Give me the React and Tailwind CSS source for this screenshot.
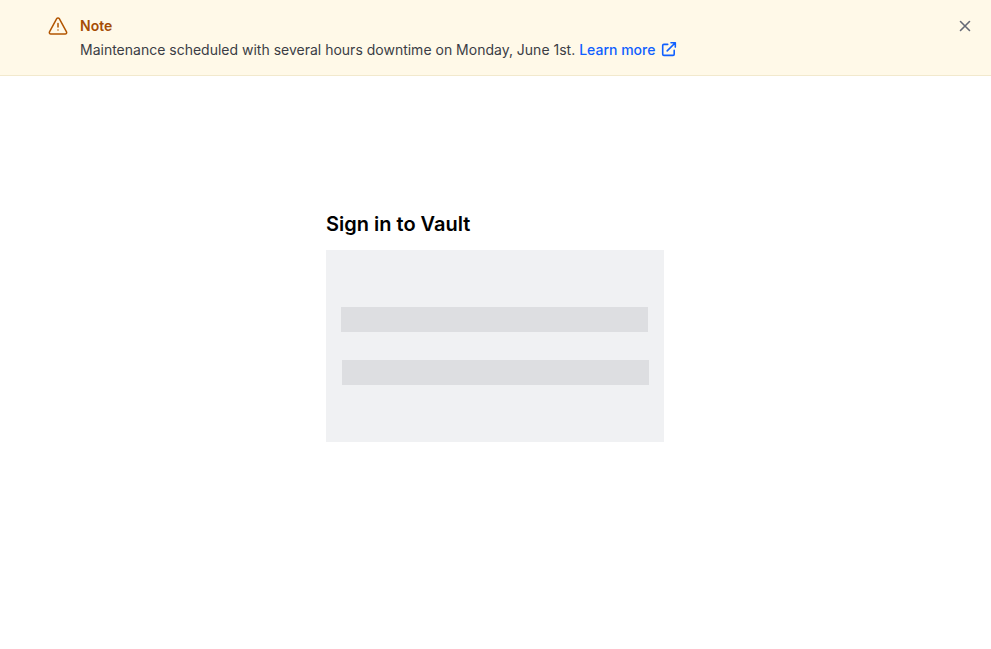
function WarningIcon() {
  return (
    <svg className="size-5 shrink-0" viewBox="0 0 20 20" fill="none" stroke="currentColor" strokeWidth="1.5" strokeLinecap="round" strokeLinejoin="round" aria-hidden="true">
      <path d="M8.7 2.7 1.5 15.8A1.5 1.5 0 0 0 2.8 18H17.2A1.5 1.5 0 0 0 18.5 15.8L11.3 2.7A1.5 1.5 0 0 0 8.7 2.7Z" />
      <path d="M10 7.4v3.6M10 14v.1" />
    </svg>
  );
}

function ExternalLinkIcon() {
  return (
    <svg className="size-4 shrink-0" viewBox="0 0 16 16" fill="none" stroke="currentColor" strokeWidth="1.6" strokeLinecap="round" strokeLinejoin="round" aria-hidden="true">
      <path d="M6.7 2.4H2.9c-.7 0-1.2.5-1.2 1.2v8.6c0 .7.5 1.2 1.2 1.2H12c.7 0 1.2-.5 1.2-1.2V8.4" />
      <path d="M10 .8h4.3v4.3M14.3.8 6.2 8.9" />
    </svg>
  );
}

function CloseIcon() {
  return (
    <svg className="size-4" viewBox="0 0 16 16" fill="none" stroke="currentColor" strokeWidth="1.6" strokeLinecap="round" aria-hidden="true">
      <path d="m3.5 3.5 9 9M12.5 3.5l-9 9" />
    </svg>
  );
}

function MaintenanceBanner() {
  return (
    <aside className="flex items-start gap-3 border-b border-[#f2e9cd] bg-[#fff9e8] pt-4 pr-[18px] pb-[13px] pl-12 text-sm">
      <div className="text-[#b25500]">
        <WarningIcon />
      </div>
      <div className="min-w-0 flex-1">
        <p className="leading-5 font-semibold text-[#a54c05]">Note</p>
        <div className="mt-0.5 flex flex-wrap items-center gap-x-1 leading-6 text-[#3b3d45]">
          <p className="leading-6">Maintenance scheduled with several hours downtime on Monday, June 1st.</p>
          <a href="#maintenance" className="flex items-center gap-1.5 font-medium text-[#1060ff]">
            Learn more
            <ExternalLinkIcon />
          </a>
        </div>
      </div>
      <button type="button" aria-label="Dismiss" className="mt-0.5 text-[#656a76]">
        <CloseIcon />
      </button>
    </aside>
  );
}

export default function App() {
  return (
    <div className="min-h-screen bg-white font-['Inter',sans-serif]">
      <MaintenanceBanner />
      <main className="mx-auto w-full max-w-[339px] pt-[134px] pr-px">
        <h1 className="text-xl leading-7 font-semibold text-black">Sign in to Vault</h1>
        <div className="mt-3 flex flex-col gap-7 bg-[#f0f1f3] px-[15px] py-[57px]">
          <div className="mr-px h-[25px] bg-[#dddee1]" />
          <div className="ml-px h-[25px] bg-[#dddee1]" />
        </div>
      </main>
    </div>
  );
}
